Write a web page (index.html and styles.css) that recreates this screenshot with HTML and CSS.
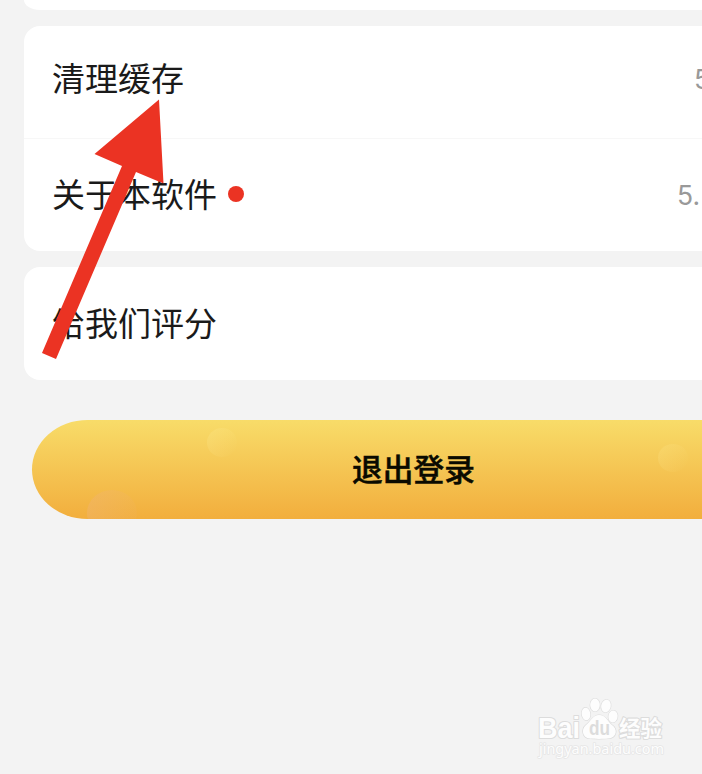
FILE: index.html
```html
<!DOCTYPE html>
<html lang="zh-CN">
<head>
    <meta charset="UTF-8">
    <meta name="viewport" content="width=device-width, initial-scale=1.0">
    <title>设置</title>
    <link rel="stylesheet" href="styles.css">
</head>
<body>
<div class="screen">
    <div class="card card-top"></div>
    <div class="card">
        <div class="row">
            <span class="label">清理缓存</span>
            <span class="value value-cache">5</span>
        </div>
        <div class="row row-about">
            <span class="label">关于本软件</span>
            <span class="dot"></span>
            <span class="value value-version">5.</span>
        </div>
    </div>
    <div class="card">
        <div class="row row-rate">
            <span class="label">给我们评分</span>
        </div>
    </div>
    <button class="logout" type="button">
        <span class="bubble bubble-small"></span>
        <span class="bubble bubble-large"></span>
        <span class="bubble bubble-right"></span>
        <span class="logout-text">退出登录</span>
    </button>
</div>

<svg class="arrow" width="140" height="270" viewBox="0 0 140 270">
    <path d="M119 99.500L123.500 183.500L96 172L16 359L2 353L82 166L54.500 154Z" transform="translate(0 -90)" fill="#eb3323"/>
</svg>

<svg class="watermark" width="140" height="76" viewBox="0 0 140 76">
    <g class="mark">
        <text class="mark-latin" x="8" y="47.500" textLength="42" lengthAdjust="spacingAndGlyphs">Bai</text>
        <ellipse cx="56" cy="24" rx="4.300" ry="6.400" transform="rotate(-8 56 24)"/>
        <ellipse cx="65" cy="15" rx="4.800" ry="6.500"/>
        <ellipse cx="76" cy="16" rx="4.800" ry="6.300" transform="rotate(12 76 16)"/>
        <ellipse cx="83" cy="26.500" rx="4.600" ry="6" transform="rotate(8 83 26.500)"/>
        <path d="M69 25C63 25 61 31 56 35C51 39 52 48 60 48.500C65 49 73 49 78 48.500C87 48 88 39 82 35C77 31 76 25 69 25Z"/>
        <text class="mark-du" x="59" y="45" textLength="21" lengthAdjust="spacingAndGlyphs">du</text>
        <text class="mark-cjk" x="89" y="46" textLength="43" lengthAdjust="spacingAndGlyphs">经验</text>
        <text class="mark-url" x="9" y="64" textLength="125" lengthAdjust="spacingAndGlyphs">jingyan.baidu.com</text>
    </g>
</svg>
</body>
</html>
```
FILE: styles.css
```css
html {
    overflow: hidden;
}
body {
    margin: 0;
    height: 774px;
    position: relative;
    overflow: hidden;
    background: #f3f3f3;
    color: #1a1a1a;
    font-family: "Noto Sans CJK SC", sans-serif;
}
.screen {
    box-sizing: border-box;
    width: 826px;
    padding: 0 24px;
}
.card {
    margin-bottom: 16px;
    border-radius: 16px;
    background: #fff;
}
.card-top {
    height: 10px;
    border-radius: 0 0 16px 16px / 0 0 10px 10px;
}
.row {
    box-sizing: border-box;
    display: flex;
    align-items: center;
    height: 112px;
    padding: 0 28px 6px;
}
.row-about {
    height: 113px;
    padding-bottom: 1px;
    border-top: 1px solid #f7f7f7;
}
.row-rate {
    height: 113px;
    padding-bottom: 0;
}
.label {
    padding-bottom: 4px;
    font-size: 33px;
    line-height: 48px;
}
.dot {
    width: 16px;
    height: 16px;
    margin: 0 0 2px 11px;
    border-radius: 50%;
    background: #eb3323;
}
.value {
    margin-left: auto;
    color: #999;
    font-family: Inter, sans-serif;
    font-size: 26.5px;
    font-weight: 400;
    line-height: 36px;
}
.value-cache {
    width: 80px;
}
.value-version {
    width: 97px;
}
.logout {
    position: relative;
    display: flex;
    align-items: center;
    justify-content: center;
    width: 762px;
    height: 99px;
    margin: 40px 8px 0;
    padding: 0;
    overflow: hidden;
    border: 0;
    border-radius: 56px / 50px;
    background: linear-gradient(#f8dc69, #f2ae3d);
    color: #0a0a00;
    font-family: inherit;
}
.logout-text {
    padding: 0 0 3px 1px;
    font-size: 30.7px;
    font-weight: 500;
    line-height: 44px;
    -webkit-text-stroke: 0.5px #0a0a00;
}
.bubble {
    position: absolute;
    border-radius: 50%;
}
.bubble-small {
    left: 175px;
    top: 8px;
    width: 30px;
    height: 29px;
    background: linear-gradient(120deg, rgba(255, 240, 160, 0.22), rgba(255, 240, 160, 0) 95%);
}
.bubble-large {
    left: 55px;
    top: 70px;
    width: 50px;
    height: 46px;
    background: linear-gradient(100deg, rgba(240, 180, 110, 0.5), rgba(240, 180, 100, 0.1));
}
.bubble-right {
    left: 626px;
    top: 24px;
    width: 30px;
    height: 28px;
    background: linear-gradient(120deg, rgba(255, 235, 150, 0.22), rgba(255, 235, 150, 0) 95%);
}
/* overlays on top of the list */
.arrow {
    position: absolute;
    left: 40px;
    top: 90px;
}
.watermark {
    position: absolute;
    left: 530px;
    top: 690px;
}
.mark {
    fill: #fdfdfd;
    stroke: #dcdcdc;
    stroke-width: 1.2;
    paint-order: stroke;
}
.mark text {
    stroke-width: 2.2;
    stroke-linejoin: round;
}
.mark-latin {
    font: 700 30px "Liberation Sans", sans-serif;
}
.mark .mark-du {
    fill: #dcdcdc;
    stroke: none;
    font: 700 20px "Liberation Sans", sans-serif;
}
.mark-cjk {
    font: 700 22px "Noto Sans CJK SC", sans-serif;
}
.mark .mark-url {
    stroke: #e6e6e6;
    stroke-width: 1.6;
    font: 400 14.5px "Noto Sans", sans-serif;
}
```
